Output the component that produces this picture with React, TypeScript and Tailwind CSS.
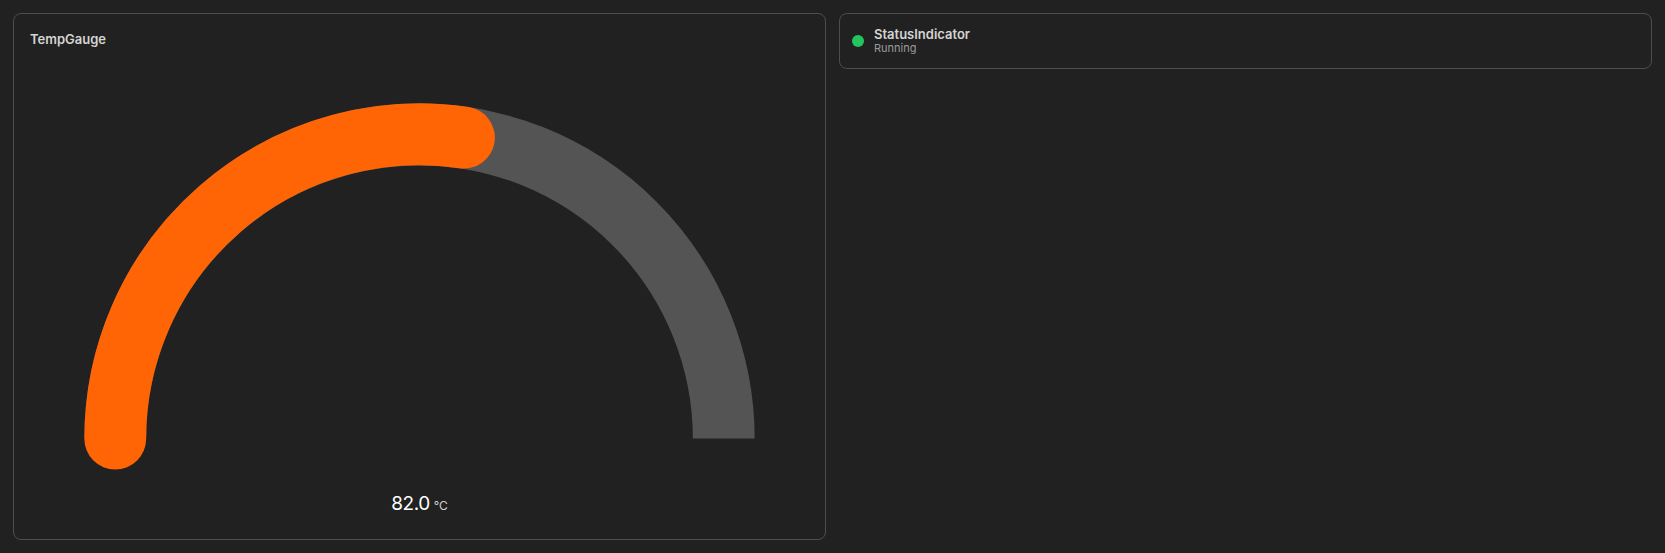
export default function App() {
  const cx = 406.5, cy = 366, r = 305;
  const frac = 82 / 150;
  const th = Math.PI - frac * Math.PI;
  const ex = cx + r * Math.cos(th);
  const ey = cy - r * Math.sin(th);
  return (
    <div className="min-h-[553px] w-[1665px] bg-[#212121] p-[13px] grid grid-cols-2 gap-[13px] items-start" style={{ fontFamily: "Inter, 'Noto Sans', sans-serif" }}>
      <div className="h-[527px] rounded-lg border border-[#4d4d4d] flex flex-col">
        <div className="px-4 pt-[16px] h-[59px] text-[13px] font-semibold text-[#d4d4d4]">TempGauge</div>
        <svg width="811" height="410" viewBox="0 0 813 410" className="block">
          <path d={`M ${cx - r} ${cy} A ${r} ${r} 0 0 1 ${cx + r} ${cy}`} fill="none" stroke="#545454" strokeWidth="62" />
          <path d={`M ${cx - r} ${cy} A ${r} ${r} 0 0 1 ${ex} ${ey}`} fill="none" stroke="#ff6505" strokeWidth="62" strokeLinecap="round" />
        </svg>
        <div className="mt-[7px] flex items-baseline justify-center gap-1 text-white">
          <span className="text-[19px] tracking-tight">82.0</span>
          <span className="text-[12px] text-[#d0d0d0]">°C</span>
        </div>
      </div>
      <div className="h-[56px] rounded-lg border border-[#4d4d4d] flex items-center px-3 gap-[10px]">
        <div className="w-3 h-3 rounded-full bg-[#22c55e]" />
        <div className="flex flex-col leading-tight">
          <span className="text-[13px] font-semibold text-[#d4d4d4]">StatusIndicator</span>
          <span className="text-[11px] text-[#9a9a9a]">Running</span>
        </div>
      </div>
    </div>
  );
}
